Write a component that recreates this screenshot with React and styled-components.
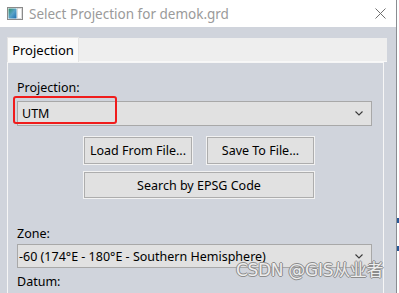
import styled, { createGlobalStyle } from "styled-components"

const GlobalStyle = createGlobalStyle`
  html, body {
    margin: 0;
    padding: 0;
    background: #ffffff;
    overflow: hidden;
  }
  * {
    box-sizing: border-box;
  }
`

const Screen = styled.div`
  width: 399px;
  height: 293px;
  display: flex;
  background: #ffffff;
  font-family: "Noto Sans", "Noto Sans CJK SC", sans-serif;
  position: relative;
  overflow: hidden;
`

const Window = styled.div`
  width: 397px;
  height: 293px;
  display: flex;
  flex-direction: column;
  background: #d0d4dc;
  border-right: 1px solid #8a8d92;
`

const TitleBar = styled.div`
  height: 27px;
  flex: none;
  display: flex;
  align-items: center;
  background: #ffffff;
  padding-left: 7px;
  padding-right: 10px;
`

const Title = styled.div`
  margin-left: 6px;
  font-size: 13.5px;
  color: #9a9a9a;
  flex: 1;
`

const Body = styled.div`
  flex: 1;
  padding: 10px 9px 0 7px;
  display: flex;
  flex-direction: column;
`

const TabBar = styled.div`
  display: flex;
  align-items: flex-end;
  height: 25px;
`

const Tab = styled.div`
  width: 72px;
  height: 25px;
  display: flex;
  align-items: center;
  justify-content: center;
  background: #fafafa;
  border: 1px solid #e4e4e4;
  border-bottom: none;
  font-size: 13px;
  color: #000;
`

const TabFill = styled.div`
  flex: 1;
  height: 24px;
  background: #eeeeee;
  border-bottom: 1px solid #f8f8f8;
`

const Panel = styled.div`
  flex: 1;
  margin-right: 3px;
  border: 1px solid #f6f6f6;
  border-bottom: none;
  padding: 16px 11px 0 9px;
  display: flex;
  flex-direction: column;
  position: relative;
`

const Label = styled.div`
  font-size: 12.5px;
  color: #000;
  height: 17px;
  line-height: 17px;
  margin-top: ${(p) => p.$top || 0}px;
`

const Combo = styled.div`
  height: ${(p) => p.$h || 25}px;
  flex: none;
  display: flex;
  align-items: center;
  background: #e1e1e1;
  border: 1px solid #a8a8a8;
  padding: 0 8px 0 ${(p) => p.$pad || 1}px;
  font-size: 12.5px;
  color: #000;
  margin-top: ${(p) => p.$top || 0}px;
`

const ComboText = styled.span`
  flex: 1;
  white-space: nowrap;
`

const ButtonGrid = styled.div`
  display: grid;
  grid-template-columns: 108px 107px;
  column-gap: 15px;
  row-gap: 8px;
  margin: 11px 0 0 67px;
`

const Button = styled.div`
  height: ${(p) => p.$h || 27}px;
  display: flex;
  align-items: center;
  justify-content: center;
  background: #e1e1e1;
  border: 1px solid #adadad;
  box-shadow: 0 0 0 1px #f2f2f2;
  font-size: 12.5px;
  color: #000;
  grid-column: ${(p) => (p.$wide ? "1 / -1" : "auto")};
`

const Highlight = styled.div`
  position: absolute;
  left: 5px;
  top: 33px;
  width: 104px;
  height: 28px;
  border: 2.5px solid #f01c1c;
  border-radius: 3px;
  pointer-events: none;
`

const Watermark = styled.div`
  position: absolute;
  left: 236px;
  top: 256px;
  font-size: 17px;
  font-family: "DejaVu Sans", "Noto Sans CJK SC", sans-serif;
  color: rgba(255, 255, 255, 0.85);
  letter-spacing: -0.3px;
  text-shadow: -1px 0 #8c8c8c, 1px 0 #8c8c8c, 0 -1px #8c8c8c, 0 1px #8c8c8c;
  white-space: nowrap;
`

const EdgeMarks = styled.div`
  position: absolute;
  right: 0;
  top: 0;
  width: 2px;
  height: 293px;
  background: linear-gradient(
    to bottom,
    transparent 0 218px,
    #2a5a9a 218px 223px,
    transparent 223px 246px,
    #2a5a9a 246px 251px,
    transparent 251px
  );
`

function WindowIcon() {
  return (
    <svg width="16" height="13" viewBox="0 0 16 13">
      <defs>
        <linearGradient id="g" x1="0" y1="0" x2="1" y2="1">
          <stop offset="0" stopColor="#2e8f6a" />
          <stop offset="0.5" stopColor="#5aa3c8" />
          <stop offset="1" stopColor="#1d6fb0" />
        </linearGradient>
      </defs>
      <rect x="0.5" y="0.5" width="15" height="12" fill="#f4f4f4" stroke="#8a8a8a" />
      <rect x="1.5" y="1.5" width="8" height="10" fill="url(#g)" />
      <rect x="10.5" y="1.5" width="4" height="10" fill="#ffffff" stroke="#c8c8c8" strokeWidth="0.6" />
    </svg>
  )
}

function CloseIcon() {
  return (
    <svg width="11" height="11" viewBox="0 0 11 11">
      <path d="M0.5 0.5 L10.5 10.5 M10.5 0.5 L0.5 10.5" stroke="#6f6f6f" strokeWidth="1" />
    </svg>
  )
}

function Chevron() {
  return (
    <svg width="8" height="5" viewBox="0 0 8 5">
      <path d="M0.5 0.5 L4 4 L7.5 0.5" stroke="#3a3a3a" strokeWidth="1.1" fill="none" />
    </svg>
  )
}

export default function App() {
  return (
    <>
      <GlobalStyle />
      <Screen>
        <Window>
          <TitleBar>
            <WindowIcon />
            <Title>Select Projection for demok.grd</Title>
            <CloseIcon />
          </TitleBar>
          <Body>
            <TabBar>
              <Tab>Projection</Tab>
              <TabFill />
            </TabBar>
            <Panel>
              <Label>Projection:</Label>
              <Combo $top={5} $pad={4}>
                <ComboText>UTM</ComboText>
                <Chevron />
              </Combo>
              <ButtonGrid>
                <Button>Load From File...</Button>
                <Button>Save To File...</Button>
                <Button $wide $h={26}>Search by EPSG Code</Button>
              </ButtonGrid>
              <Label $top={27}>Zone:</Label>
              <Combo $top={2} $h={24}>
                <ComboText>-60 (174°E - 180°E - Southern Hemisphere)</ComboText>
                <Chevron />
              </Combo>
              <Label $top={5}>Datum:</Label>
              <Highlight />
            </Panel>
          </Body>
        </Window>
        <EdgeMarks />
        <Watermark>CSDN @GIS从业者</Watermark>
      </Screen>
    </>
  )
}
